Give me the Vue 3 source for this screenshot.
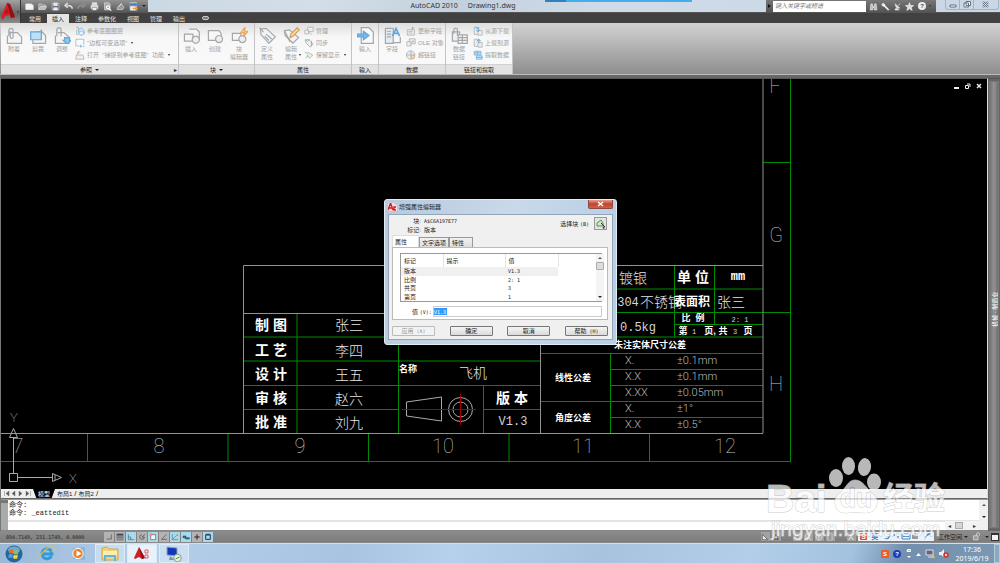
<script setup>
import { h, ref } from 'vue'

const G = '#a3a7aa'
const B = '#62a8dc'
const icons = {
  attach: [['M5 8h11l6 6v9H2V12', G, '#f4f4f4'], ['M4 13V5a3 3 0 0 1 6 0v9a2 2 0 0 1-4 0V6', G, 'none']],
  clip: [['M8 7h9l5 5v11H4V10', G, '#f4f4f4'], ['M1 7h15v11H1z', B, '#bfdff5'], ['M16 3v4', B, 'none']],
  adjust: [['M5 8h9l7 6v9H2V12', G, '#f4f4f4'], ['M4 13V4a3 3 0 0 1 6 0v9', G, 'none'], ['M15 15h7v4h2l-5 5-6-5h2z', B, '#8cc5ee']],
  layers: [['M4 6V4a2 2 0 0 1 4 0v8M4 10v10h5', G, 'none'], ['M9 8l7-3 6 6v8l-8 4-5-6z', B, '#e6f1fa'], ['M9 15l7-4 6 6', B, 'none']],
  border: [['M2 3h19v13M2 3v16h8', G, '#fafafa'], ['M11 20h6m2 0h4M14 16v7', B, 'none']],
  open: [['M3 12h16l3 10H2z', G, '#f7f0ea'], ['M6 12V5h7M9 2v7', '#e5a183', 'none']],
  insert: [['M9 3h10l4 4v10H10', G, '#f6f6f6'], ['M2 10h12v10H2z', G, '#f6f6f6'], ['M18 13a5 5 0 1 0 .1 0', G, '#eee']],
  create: [['M2 5h15l3 4v10H2z', G, '#f6f6f6'], ['M17 12a5 5 0 1 0 .1 0', G, '#eee']],
  edit: [['M2 9h12v10H2z', G, '#f6f6f6'], ['M16 12a5 5 0 1 0 .1 0', G, '#eee'], ['M20 0l-6 8h5l-2 6 7-8h-5z', '#e6a75b', '#fbdba5']],
  tag: [['M2 3l8-1 13 12-9 9L3 11z', G, '#f3f3f3'], ['M6 7h.5M10 10l8 7M8 13l6 6', G, 'none'], ['M1 1l5 6', G, 'none']],
  tagedit: [['M2 5l7-1 13 11-8 8L3 12z', G, '#f3f3f3'], ['M10 15l1-5L20 1l3 3-9 9z', '#d3a15e', '#f3dcaa'], ['M2 5l8 16', G, 'none']],
  manage: [['M9 3h13v10H9z', G, '#f1f1f1'], ['M2 10h9v9H2z', G, '#f1f1f1'], ['M11 13l8 8', G, 'none']],
  sync: [['M3 5l7-2 12 11-7 8L4 11z', G, '#eee'], ['M3 3l5 5 6-5M18 7v13', '#76ac82', 'none']],
  keep: [['M2 5l9 6-7 9', '#73b480', 'none'], ['M8 5l13 7-9 9', G, '#eee'], ['M8 13l4 5', '#5aa86d', 'none']],
  import: [['M6 1h11l6 6v16H6z', G, '#fafafa'], ['M0 10h9V6l8 6-8 6v-4H0z', B, '#79b7e8']],
  field: [['M2 2h11v21H2zM4 6h6M4 10h6M4 14h6', G, '#e4ebf1'], ['M13 22h10V14', G, 'none'], ['M12 13l5-11 5 11M14 9h6', B, 'none', 2.4]],
  update: [['M3 9h17v13H3zM6 13h10M6 17h10', G, '#f1f1f1'], ['M16 9V3m-3 3l3-3 4 3', '#75ad72', 'none']],
  ole: [['M8 2h14v12H8z', G, '#eee'], ['M2 9h10v10H2z', G, '#eee'], ['M13 12l4-6 3 5', G, 'none']],
  link: [['M11 2a10 10 0 1 0 .1 0M2 12h20M12 2v20', G, '#e9e9e9'], ['M13 17a4 4 0 1 0 8 0a4 4 0 1 0-8 0', '#dba65a', 'none']],
  datalink: [['M2 7h10v13H2z', G, '#f0f0f0'], ['M10 11h13v12H10zM10 15h13M10 19h13M16 11v12', G, '#f4f4f4'], ['M4 10V4a2 2 0 0 1 5 0v8', G, 'none']],
  down: [['M3 3h11v17H3z', G, '#eee'], ['M12 11h10v11H12z', G, '#eee'], ['M6 5h8M12 5v8m-4-3l4 4 4-4', B, 'none', 2.4]],
  up: [['M3 3h11v17H3z', G, '#eee'], ['M12 11h10v11H12z', G, '#eee'], ['M14 12V4m-5 4l5-5 5 5', B, 'none', 2.4]],
  extract: [['M3 3h16v9H3zM8 14h14v8H8z', B, '#cfe6f7'], ['M3 7h16M10 3v9M8 18h14', B, 'none']],
  newfile: [['M2 5h15l5 4v11H2z', '#eee', '#f4f4f4']],
  folder: [['M2 5h8l2 3h8v4H7L2 20z', '#ddd', '#999'], ['M7 12h16l-4 8H2z', '#ddd', '#bbb']],
  save: [['M3 3h18v18H3z', '#d5dae2', '#59616e'], ['M7 3h10v7H7zM7 15h10v6H7z', '#eee', '#eee']],
  undo: [['M22 18c0-9-8-9-13-9M10 3L3 9l7 6', '#ddd', 'none', 4]],
  redo: [['M2 18c0-9 8-9 13-9M14 3l7 6-7 6', '#8e8e8e', 'none', 4]],
  print: [['M6 8V2h12v6M3 9h18v9H3z', '#eee', '#ddd'], ['M6 15h12v7H6z', '#777', '#fff']],
  preview: [['M4 2h12l3 4v15H4z', '#ddd', '#aaa'], ['M13 10a4 4 0 1 0 .1 0M16 17l6 6', '#fff', 'none', 3]],
  plot: [['M3 15L14 5l7 9-3 6H3z', '#ddd', '#999'], ['M7 13l8-10', '#fff', 'none']],
  sheet: [['M3 2h17v20H3z', '#ddd', '#eee'], ['M3 4h17v6H3z', '#4585be', '#4585be'], ['M10 17h12m-5-5l5 5-5 5', '#e79a3c', 'none', 3]],
  find: [['M3 21l2-16h4l1 7h4l1-7h4l2 16h-7v-6h-4v6z', '#eee', '#bbb']],
  wrench: [['M4 4l5 1 2 5 10 10-2 2L9 12 4 10 2 6l4 2 1-1z', '#fff', '#fff']],
  dish: [['M6 5l12 11c-8 2-12-4-12-11zM14 10l5-6M9 15l-4 6h12', '#eee', '#ddd']],
  star: [['M12 2l3 7 8 .5-6 5 2 8-7-4.500-7 4.500 2-8-6-5 8-.5z', '#eee', '#ddd']],
  snap: [['M19 4v14H5', '#333', 'none']],
  grid: [['M3 4h18v17H3zM3 9h18M3 14h18M9 4v17M15 4v17', '#4b5158', 'none', 1.5], ['M3 3h18v3H3z', '#444', '#444']],
  ortho: [['M4 3v17h17M4 12h7v8', '#31566e', 'none']],
  polar: [['M12 5a7 7 0 1 0 7 7M12 12l9-8M12 12h7', '#333', 'none']],
  osnap: [['M5 5h15v15H5z', '#444', '#f5f5f5'], ['M2 2h6v6H2z', '#e68a3a', '#f5b277']],
  track: [['M19 4L5 19h16', '#333', 'none']],
  ducs: [['M4 3v17h17M4 20L17 7', '#3b6a8c', 'none'], ['M17 4l4 4', '#d8993f', 'none', 4]],
  dyn: [['M3 9h9v5H3zM10 14h12v4H10z', '#224f66', '#37708c']],
  plus: [['M12 4v16M4 12h16', '#222', 'none', 3]],
  props: [['M5 6h14v13H5zM5 4h14', '#235', 'none', 3]],
  corner: [['M4 4v16h16z', '#333', '#eee']],
  peak: [['M3 20h18M6 17l6-13 6 13z', '#333', '#ddd']],
  pan: [['M5 12l4-7 3 5 3-6 5 9-6 8z', '#eee', '#999']],
  zoomer: [['M10 4a6 6 0 1 0 .1 0M15 15l6 6', '#eee', 'none', 2.5]],
  wheel: [['M12 3a9 9 0 1 0 .1 0M12 9a3 3 0 1 0 .1 0', '#eee', 'none', 2.5]],
  film: [['M6 3h12v18H6zM6 9h12M6 15h12', '#eee', '#777']],
  person: [['M12 3v7L5 21M12 10l7 11', '#eee', 'none', 3]],
  lock: [['M4 10h12v11H4z', '#eee', '#999'], ['M12 10V6a4 4 0 0 1 8 0v4', '#eee', 'none']]
}
const Icon = (p) => h('svg', { viewBox: '0 0 24 24', 'aria-hidden': 'true', width: p.size || 10, height: p.size || 10 },
  icons[p.name].map(([d, stroke, fill, w]) => h('path', { d, stroke, fill, 'stroke-width': w || 1.7 })))
Icon.props = ['name', 'size']

const quick = ['newfile', 'folder', 'save', 'undo', 'redo', 'print', 'preview', 'plot', 'sheet']
const menu = ['常用', '插入', '注释', '参数化', '视图', '管理', '输出']
const panels = [
  { name: '参照', cls: 'p-ref', drop: true, corner: true,
    big: [['attach', '附着'], ['clip', '剪裁'], ['adjust', '调整']],
    rows: [['layers', '参考底图图层'], ['border', '"边框可变选项"', 1], ['open', '打开  "捕捉到参考底图"  功能', 1]] },
  { name: '块', cls: 'p-block', drop: true, big: [['insert', '插入'], ['create', '创建'], ['edit', '块', '编辑器']], rows: [] },
  { name: '属性', cls: 'p-attr', big: [['tag', '定义', '属性'], ['tagedit', '编辑', '属性', 1]],
    rows: [['manage', '管理'], ['sync', '同步'], ['keep', '保留显示', 1]] },
  { name: '输入', cls: 'p-in', big: [['import', '输入']], rows: [] },
  { name: '数据', cls: 'p-data', big: [['field', '字段']], rows: [['update', '更新字段'], ['ole', 'OLE 对象'], ['link', '超链接']] },
  { name: '链接和提取', cls: 'p-link', big: [['datalink', '数据', '链接']], rows: [['down', '从源下载'], ['up', '上载到源'], ['extract', '提取数据']] }
]

const green = [
  'M790.500 78V462M1 461.500H791M763 162.500H791M763 312.500H791',
  'M87.500 433V461M228 433V461M368.500 433V461M509 433V461M649.500 433V461',
  'M297 313V433M398.500 313V433M243 337H540M243 361H540M243 385.500H540M243 409.500H399M483.500 385V433M484 409.500H540',
  'M674.500 265V337M714.500 265V324M540 289H763M540 312.500H763M674 324.500H763M540 337H763',
  'M540 353.500H763M610.500 353V433M610 369.500H763M610 385.500H763M540 401.500H763M610 417.500H763'
]
const heads = [
  [271, 325, '制 图'], [271, 350, '工 艺'], [271, 374, '设 计'], [271, 398, '审 核'], [271, 422, '批 准'],
  [512, 398, '版 本'], [693, 277, '单 位']
]
const names = [[349, 324, '张三'], [349, 350, '李四'], [349, 374, '王五'], [349, 398, '赵六'], [349, 422, '刘九'],
  [473, 372, '飞机'], [633, 277, '镀银'], [731, 301, '张三']]
const smallHeads = [[573, 378, '线性公差'], [573, 418, '角度公差'], [650, 345, '未注实体尺寸公差'],
  [693, 318, '比  例'], [683, 331, '第'], [710, 331, '页,'], [723, 331, '共'], [748, 331, '页']]
const tol = [[360, 'X.', '±0.1mm'], [376, 'X.X', '±0.1mm'], [392, 'X.XX', '±0.05mm'], [408, 'X.', '±1°'], [424, 'X.X', '±0.5°']]
const zones = [[18, 446, '7'], [159, 446, '8'], [300, 446, '9'], [443, 446, '10'], [583, 446, '11'], [725, 446, '12'],
  [775, 86, 'F'], [776, 235, 'G'], [776, 384, 'H']]

const attrs = [['版本', '', 'V1.3'], ['比例', '', '2: 1'], ['共页', '', '3'], ['第页', '', '1']]
const value = ref('V1.3')
const toggles = [['snap', 0], ['grid', 0], ['ortho', 1], ['polar', 0], ['osnap', 1], ['track', 0], ['ducs', 1], ['dyn', 1], ['plus', 0], ['props', 1]]
</script>

<template>
  <div class="app">
    <header class="top">
      <button class="logo" aria-label="应用程序菜单">
        <svg width="14" height="18" viewBox="0 0 14 18"><path d="M0 14L6 0l3 1 5 13-4 1-1-3-5 1-2 4z" fill="#d61f26" /><path d="M6 0l3 1 5 13-4 1z" fill="#951016" /><path d="M3 11l3-6 2 5z" fill="#b3151c" /></svg>
        <i class="caret dark"></i>
      </button>
      <div class="bars">
        <div class="titlebar">
          <div class="quick">
            <button v-for="q in quick" :key="q" :aria-label="q"><Icon :name="q" size="9" /></button>
            <i class="caret"></i>
          </div>
          <h1><span>AutoCAD 2010</span><span>Drawing1.dwg</span></h1>
          <div class="search">
            <i class="tri"></i>
            <input type="text" aria-label="搜索" placeholder="键入关键字或短语">
            <button v-for="q in ['find', 'wrench', 'dish', 'star']" :key="q" :aria-label="q"><Icon :name="q" size="9" /></button>
            <button class="help">?</button><i class="caret dark"></i>
          </div>
          <div class="winbtns">
            <button aria-label="最小化"><svg width="8" height="7"><path d="M1 4h6v2H1z" fill="#fff" stroke="#65717f" /></svg></button>
            <button aria-label="还原"><svg width="8" height="7"><path d="M3 .5h4.500v4H3zM1 2h4.500v4H1z" fill="#fff" stroke="#65717f" /></svg></button>
            <button aria-label="关闭" class="wide"><svg width="8" height="7"><path d="M1 1l5 5M6 1L1 6" stroke="#65717f" stroke-width="2" /><path d="M1 1l5 5M6 1L1 6" stroke="#fff" stroke-width=".7" /></svg></button>
          </div>
        </div>
        <nav class="menu">
          <button v-for="(m, i) in menu" :key="m" :class="{ on: i === 1 }">{{ m }}</button>
          <span class="pill"></span>
        </nav>
      </div>
      <div class="notice"></div>
    </header>

    <section class="ribbon">
      <div v-for="p in panels" :key="p.name" class="panel" :class="p.cls">
        <div class="tools">
          <button v-for="b in p.big" :key="b[0]" class="big">
            <Icon :name="b[0]" size="17" />
            <span>{{ b[1] }}</span>
            <span v-if="b[2]">{{ b[2] }}<i v-if="b[3]" class="caret dark hang"></i></span>
          </button>
          <div v-if="p.rows.length" class="rows">
            <button v-for="r in p.rows" :key="r[0]"><Icon :name="r[0]" size="10" />{{ r[1] }}<i v-if="r[2]" class="caret dark"></i></button>
          </div>
        </div>
        <div class="pname">{{ p.name }}<i v-if="p.drop" class="caret big-c"></i><i v-if="p.corner" class="corner">▸</i></div>
      </div>
    </section>

    <main class="work">
      <div class="left">
        <div class="canvas">
          <svg class="drawing" width="100%" height="100%">
            <g transform="translate(-1,-79)" fill="none">
              <path v-for="d in green" :key="d" :d="d" stroke="#008a00" />
              <path d="M763 78V433M1 433.500H763M243.500 433V265.500H763M243 313.500H540M540.500 313V433" stroke="#929292" />
              <path d="M406.500 402L441.500 397V421L406.500 416z" stroke="#aaa" />
              <circle cx="460.500" cy="409.500" r="12" stroke="#aaa" /><circle cx="460.500" cy="409.500" r="7.500" stroke="#aaa" />
              <path d="M402 409.500H476M460.500 394V425" stroke="#a40000" />
              <g stroke="#aaa">
                <path d="M9.500 473.500h8v8h-8zM13.500 473V438M9.500 437.500h8l-4-9zM18 477.500H52M52.500 473.500v8l9-4zM55 475v5" />
              </g>
              <g class="t zone">
                <text v-for="z in zones" :key="z[2]" :x="z[0]" :y="z[1]">{{ z[2] }}</text>
                <text x="14" y="417" class="ucs">Y</text><text x="73" y="478" class="ucs">X</text>
              </g>
              <g class="t head"><text v-for="(z, i) in heads" :key="i" :x="z[0]" :y="z[1]">{{ z[2] }}</text></g>
              <g class="t name">
                <text v-for="(z, i) in names" :key="i" :x="z[0]" :y="z[1]">{{ z[2] }}</text>
                <text x="661" y="301">不锈钢</text>
              </g>
              <g class="t mono">
                <text x="628" y="303">304</text><text x="638" y="328">0.5kg</text><text x="513" y="422">V1.3</text>
                <text x="738" y="277" class="mm">mm</text>
                <text x="740" y="320" class="tiny">2: 1</text><text x="694" y="332" class="tiny">1</text><text x="735" y="332" class="tiny">3</text>
              </g>
              <g class="t small">
                <text v-for="(z, i) in smallHeads" :key="i" :x="z[0]" :y="z[1]">{{ z[2] }}</text>
                <text x="408" y="369">名称</text>
                <text x="692" y="302" class="mid">表面积</text>
              </g>
              <g class="tol"><template v-for="r in tol" :key="r[0]"><text x="625" :y="r[0]">{{ r[1] }}</text><text x="677" :y="r[0]">{{ r[2] }}</text></template></g>
            </g>
          </svg>
          <div class="docbtns">
            <button aria-label="最小化"><svg width="6" height="6"><path d="M0 5h5" stroke="#eee" stroke-width="2" /></svg></button>
            <button aria-label="还原"><svg width="6" height="6"><path d="M2 1h3v3M.5 2.500h3v3h-3z" stroke="#eee" fill="none" /></svg></button>
            <button aria-label="关闭"><svg width="6" height="6"><path d="M1 1l4 4M5 1L1 5" stroke="#eee" stroke-width="1.400" /></svg></button>
          </div>
        </div>
        <div class="layouts">
          <svg width="30" height="7"><path d="M3.500 1v5M8 1v5L5 3.500zM14 1v5l-3-2.500zM18 1v5l3-2.500zM25 1v5l3-2.500zM29.500 1v5" fill="#555" stroke="#777" stroke-width=".5" /></svg>
          <button class="on">模型</button><button>布局1</button><span>/</span><button>布局2</button><span>/</span>
        </div>
        <div class="cmd">
          <div class="grip"></div>
          <div class="log">
            <p>命令:</p><p>命令: <span>_eattedit</span></p>
            <input type="text" aria-label="命令行">
          </div>
          <div class="vs"><i class="up"></i><i class="caret"></i></div>
          <div class="hs"><i>◂</i><b></b><i>▸</i></div>
        </div>
      </div>
      <aside class="palette">
        <svg width="10" height="100%"><text class="ptext" transform="translate(7,245) rotate(-90)">机械 - 制造业</text></svg>
      </aside>
    </main>

    <footer class="status">
      <span class="coords">894.7149, 231.1749, 0.0000</span>
      <div class="toggles"><button v-for="t in toggles" :key="t[0]" :class="{ on: t[1] }" :aria-label="t[0]"><Icon :name="t[0]" size="8" /></button></div>
      <div class="sright">
        <button class="chip" aria-label="模型"><Icon name="corner" size="8" /></button><button class="chip" aria-label="布局"><Icon name="peak" size="8" /></button>
        <span class="gap"></span>
        <button v-for="n in ['pan', 'zoomer', 'wheel', 'film']" :key="n" class="chip" :aria-label="n"><Icon :name="n" size="8" /></button>
        <span class="gap"></span>
        <button class="chip" aria-label="注释比例"><Icon name="person" size="8" /></button>
        <div class="ime">
          <b>S</b><em>英</em>
          <svg width="36" height="9" viewBox="0 0 36 9" fill="#3b87cc"><path d="M6 1c1 4-2 6-5 5 3 3 8 0 5-5z" /><circle cx="11" cy="3" r="1" /><path d="M14 4l1 3 1-3z" /><path d="M19 2h8v5h-8z" fill="none" stroke="#3b87cc" /><path d="M20 4.500h6" stroke="#3b87cc" /><path d="M31 1h2v2h2v4h-6V3h2z" fill="#999" /></svg>
          <svg width="9" height="9" viewBox="0 0 9 9"><path d="M1 8l3-4 4-2-1-1-3 1-2 4z" fill="#3b87cc" /></svg>
        </div>
        <button class="ws">工作空间<i class="caret"></i></button>
        <button class="chip lock" aria-label="锁定"><Icon name="lock" size="9" /></button><i class="caret"></i><button class="full" aria-label="全屏"></button>
      </div>
    </footer>

    <footer class="taskbar">
      <button class="orb" aria-label="开始"><svg width="18" height="18" viewBox="0 0 18 18"><circle cx="9" cy="9" r="8.500" fill="#28659a" /><ellipse cx="9" cy="5" rx="6" ry="3.500" fill="#6fa9cf" /><path d="M4.500 5q2-1 4 0l-.5 3.500q-2-1-4 0z" fill="#ef6a2f" /><path d="M9.300 5.300q2 1 4.200 0L13 9q-2 1-4.200 0z" fill="#8cc63f" /><path d="M3.800 9.500q2-1 4 0l-.5 3.500q-2-1-4 0z" fill="#3fa9f0" /><path d="M8.600 9.800q2 1 4.200 0l-.5 3.500q-2 1-4.200 0z" fill="#ffd23e" /></svg></button>
      <button class="task" aria-label="浏览器"><svg width="17" height="17" viewBox="0 0 17 17"><path d="M13.500 11a5 5 0 1 1 .5-2H5" stroke="#2f9be0" stroke-width="3" fill="none" /><path d="M2 15C-1 13 8 1 15 2c2 1 0 4-1 5" stroke="#f0bd3c" stroke-width="1.200" fill="none" /></svg></button>
      <button class="task" aria-label="媒体播放器"><svg width="15" height="15" viewBox="0 0 15 15"><path d="M2 2l12-1v13l-12-1z" fill="#7fb9e0" /><circle cx="7" cy="7.500" r="5.200" fill="#f0802a" stroke="#fff" /><path d="M5.500 4.500v6l5-3z" fill="#fff" /></svg></button>
      <button class="task open" aria-label="资源管理器"><svg width="18" height="16" viewBox="0 0 18 16"><path d="M1 2l5-1 2 2h9v11H1z" fill="#f1d275" stroke="#d1a849" /><path d="M2 5h14v5H2z" fill="#fcefb4" /><path d="M4 15v-5h10v5" stroke="#65b4dd" stroke-width="2" fill="none" /></svg></button>
      <button class="task open hot" aria-label="AutoCAD"><svg width="18" height="16" viewBox="0 0 18 16"><path d="M1 12L6 1l6 11-3 1-3-2-4 2z" fill="#cf1f27" /><path d="M6 1l6 11-3 1z" fill="#8e1016" /><path d="M12 4h3v3h-3zM12 9h3v3h-3z" fill="none" stroke="#e05a5f" /></svg></button>
      <button class="task open" aria-label="远程"><svg width="18" height="16" viewBox="0 0 18 16"><path d="M2 1l10 1v8L2 9z" fill="#1138b8" stroke="#8fa3bd" /><path d="M5 10l5 4H4z" fill="#8192a8" /><circle cx="12.500" cy="12" r="3.800" fill="#e6efe2" stroke="#8ba08b" /><path d="M10.500 13l4-2" stroke="#3d9a3d" /></svg></button>
      <div class="tray">
        <b class="sogou">S</b><b class="q">?</b>
        <svg width="7" height="12"><path d="M2.500 1.500h3v2h-3zM1.500 3h3" fill="none" stroke="#fff" /><path d="M2 8h4L4 10z" fill="#fff" /></svg>
        <svg width="5" height="6"><path d="M0 5h5L2.500 2z" fill="#fff" /></svg>
        <svg width="10" height="9"><path d="M1 1h7v5H1zM3 8h4" fill="#667" stroke="#dde" /><path d="M6 9l2-4 2 4z" fill="#f2c230" /></svg>
        <svg width="10" height="9"><path d="M0 3h2l3-3v8L2 6H0z" fill="#eee" /><circle cx="7" cy="6" r="2.800" fill="#d8322a" /><path d="M6 5l2 2M8 5L6 7" stroke="#fff" stroke-width=".8" /></svg>
        <time><span>17:36</span><span>2019/6/19</span></time>
      </div>
      <button class="desk" aria-label="显示桌面"></button>
    </footer>

    <section class="dialog" role="dialog" aria-label="增强属性编辑器">
      <div class="dtitle">
        <svg width="9" height="8" viewBox="0 0 9 8"><path d="M0 0h6l3 3v5H0z" fill="#f7dada" /><path d="M0 7L2.500 0 5 7M1 5h3M8 4H6v3h2" fill="none" stroke="#cf2027" stroke-width="1.400" /></svg>
        <h2>增强属性编辑器</h2>
        <button aria-label="关闭"><svg width="7" height="6"><path d="M1 1l5 4M6 1L1 5" stroke="#fff" stroke-width="1.500" /></svg></button>
      </div>
      <div class="dbody">
        <div class="info">
          <dl><dt>块:</dt><dd class="m">A$C6A197E77</dd><dt>标记:</dt><dd>版本</dd></dl>
          <label for="pick">选择块 <span class="m">(B)</span></label>
          <button id="pick" aria-label="选择块"><svg width="10" height="10" viewBox="0 0 10 10"><path d="M1 7V4l4-3 2 3v3z" fill="#cfe8c8" stroke="#4f9a45" /><path d="M5 4l4 4H7l1 2" fill="none" stroke="#333" /></svg></button>
        </div>
        <div class="dtabs"><button class="on">属性</button><button>文字选项</button><button>特性</button></div>
        <div class="pane">
          <div class="list">
            <table>
              <thead><tr><th class="c1">标记</th><th class="c2">提示</th><th class="c3">值</th><th></th></tr></thead>
              <tbody><tr v-for="(a, i) in attrs" :key="i" :class="{ sel: !i }"><td>{{ a[0] }}</td><td>{{ a[1] }}</td><td class="m">{{ a[2] }}</td><td></td></tr></tbody>
            </table>
            <div class="sb"><i class="up"></i><b></b><i class="caret"></i></div>
          </div>
          <div class="val"><label for="val">值 <span class="m">(V):</span></label><input id="val" v-model="value" type="text"></div>
        </div>
        <div class="dbtns">
          <button disabled>应用<span class="m"> (A)</span></button><button>确定</button><button>取消</button><button>帮助<span class="m"> (H)</span></button>
        </div>
      </div>
    </section>

    <svg class="mark" width="184" height="90" viewBox="766 453 184 90" aria-label="Baidu经验">
      <g fill="#fff" stroke="#bbb" stroke-width="1" paint-order="stroke">
        <g stroke="none"><ellipse cx="836" cy="478" rx="7" ry="9" /><ellipse cx="848.500" cy="466" rx="6.500" ry="9" /><ellipse cx="864.500" cy="467" rx="6.500" ry="9" transform="rotate(8 864 467)" /><ellipse cx="874" cy="482" rx="7" ry="8.500" /></g>
        <path d="M855 480c-7 0-9 8-15 13-5 4-6 8-4 14 2 7 9 6 19 5 10 1 18 2 21-5 2-6 1-9-4-14-6-5-9-13-17-13z" />
        <text x="766" y="512" class="bai">Bai</text>
        <text x="840" y="507" class="du">du</text>
        <text x="883" y="509" class="jy">经验</text>
        <text x="771" y="536" class="url">jingyan.baidu.com</text>
      </g>
    </svg>
  </div>
</template>

<style>
body { margin: 0; background: #000; }
</style>

<style scoped>
.app { position: relative; display: flex; flex-direction: column; min-height: 100vh; overflow: hidden; font: 6px/8px "Liberation Sans", "Noto Sans CJK SC", sans-serif; color: #222; background: #6c6c6c; }
.app * { box-sizing: border-box; }
button { font: inherit; color: inherit; border: 0; padding: 0; margin: 0; background: none; display: flex; align-items: center; justify-content: center; }
input { font: inherit; border: 0; padding: 0; min-width: 0; outline: 0; background: #fff; border-radius: 0; }
h1, h2, p, dl, dd { margin: 0; font: inherit; }
svg { display: block; flex: none; }
.m { font-family: "DejaVu Sans Mono", monospace; font-size: 5px; }
.caret { display: block; flex: none; border: 2px solid transparent; border-top: 2px solid #222; border-bottom: 0; }
.up { display: block; border: 2px solid transparent; border-bottom: 2px solid #555; border-top: 0; }
.caret.dark { border-width: 1px; border-top: 2px solid #333; border-bottom: 0; }

.top { position: relative; display: flex; height: 23px; background: #414141; }
.logo { width: 21px; background: linear-gradient(#a2a2a2, #666 60%, #8c8c8c); border-right: 1px solid #333; gap: 2px; }
.bars { flex: 1; display: flex; flex-direction: column; min-width: 0; }
.titlebar { display: flex; height: 13px; background: linear-gradient(100deg, #c6d3e0, #d3dee9 30%, #c3d0dd 45%, #cfdbe8 60%, #c9d6e3); border-bottom: 1px solid #555; }
.quick { display: flex; align-items: center; width: 127px; padding: 0 4px; gap: 5px; background: linear-gradient(#929292, #585858); }
.quick button { width: 8px; }
.titlebar h1 { flex: 1; display: flex; justify-content: center; gap: 10px; font: 7px/12px "Noto Sans", sans-serif; color: #333; padding-left: 12px; }
.search { display: flex; align-items: center; gap: 3px; width: 170px; background: linear-gradient(#777, #555); padding-right: 2px; }
.search input { width: 93px; height: 11px; padding-left: 2px; font-style: italic; }
.search input::placeholder { color: #777; opacity: 1; }
.tri { width: 4px; margin-left: 2px; margin-right: -2px; border: 2px solid transparent; border-left: 3px solid #111; border-right: 0; }
.help { width: 8px; height: 8px; border-radius: 4px; background: #eee; color: #444; font-weight: bold; margin-left: 1px; }
.winbtns { display: flex; width: 54px; height: 10px; margin: 0 1px 0 9px; border: 1px solid #a5b3c1; border-top: 0; border-radius: 0 0 3px 3px; }
.winbtns button { width: 14px; border-right: 1px solid #a5b3c1; }
.winbtns .wide { width: auto; flex: 1; border: 0; }
.menu { display: flex; align-items: flex-end; height: 10px; padding-left: 3px; color: #e6e6e6; gap: 1px; }
.menu button { height: 9px; padding: 0 5px; }
.menu button.on { background: #e4e4e4; color: #222; }
.pill { width: 7px; height: 4px; margin: 0 0 3px 11px; border: 1px solid #ccc; border-radius: 2px; background: #777; }
.notice { position: absolute; left: 545px; top: 0; width: 147px; height: 2px; background: linear-gradient(90deg, #3182b8 21px, #43aeea 21px); }

.ribbon { display: flex; height: 55px; padding: 0 0 3px 1px; background: linear-gradient(#d2d2d2, #8e8e8e 51px, #bcbcbc 51px, #bcbcbc 52px, #686868 52px); color: #a0a0a0; }
.panel { display: flex; flex-direction: column; border-right: 1px solid #c3c3c3; background: linear-gradient(#dedede, #f7f7f7 14px, #fafafa); margin-bottom: 1px; }
.p-ref { width: 178px; } .p-block { width: 76px; } .p-attr { width: 97px; } .p-in { width: 27px; } .p-data { width: 67px; } .p-link { width: 67px; }
.tools { flex: 1; display: flex; padding-left: 1px; }
.big { flex-direction: column; justify-content: flex-start; width: 24px; padding-top: 4px; }
.big svg { margin-bottom: 1px; }
.big span { position: relative; white-space: nowrap; }
.hang { position: absolute; right: -4px; top: 1px; }
.rows { display: flex; flex-direction: column; padding-top: 2px; margin-left: 1px; }
.rows button { height: 12px; gap: 2px; justify-content: flex-start; white-space: pre; }
.rows .caret { margin-left: 2px; }
.pname { position: relative; display: flex; align-items: center; justify-content: center; gap: 3px; height: 10px; background: #e2e2e2; color: #222; border-top: 1px solid #d2d2d2; }
.corner { position: absolute; right: 1px; font-style: normal; }
.p-block .tools, .p-attr .tools { padding-left: 0; }
.p-data .rows, .p-link .rows { margin-left: 2px; }

.work { flex: 1; display: flex; min-height: 0; }
.left { flex: 1; display: flex; flex-direction: column; min-width: 0; border-left: 1px solid #777; }
.canvas { position: relative; flex: 1; background: #000; border-top: 1px solid #555; border-right: 1px solid #ddd; overflow: hidden; }
.drawing { position: absolute; inset: 0; }
.t text { text-anchor: middle; dominant-baseline: central; white-space: pre; }
.zone { fill: #c4c4c4; font: 20px "Liberation Sans Narrow", "Roboto", sans-serif; font-weight: 100; }
.zone .ucs { font-size: 13px; fill: #ddd; }
.head { fill: #fff; font: bold 14px "Liberation Sans", "Noto Sans CJK SC", sans-serif; }
.name { fill: #e4e4e4; font: 300 14px "Noto Sans CJK SC", sans-serif; }
.mono { fill: #d4d4d4; font: 12px "Liberation Mono", monospace; }
.mono .mm { fill: #fff; font-weight: bold; }
.mono .tiny { font-size: 7px; }
.small { fill: #fff; font: bold 9px "Liberation Sans", "Noto Sans CJK SC", sans-serif; }
.small .mid { font-size: 12px; }
.tol { fill: #bbb; font: 300 11px "Roboto", sans-serif; }
.tol text { dominant-baseline: central; }
.docbtns { position: absolute; right: 5px; top: 4px; display: flex; gap: 5px; }
.layouts { display: flex; align-items: center; height: 10px; gap: 2px; background: #eee; border-bottom: 1px solid #666; border-right: 1px solid #ddd; color: #222; }
.layouts .on { background: #000; color: #fff; width: 22px; height: 9px; clip-path: polygon(0 0, 100% 0, 85% 100%, 15% 100%); }
.layouts span { font-size: 8px; }
.cmd { position: relative; display: flex; height: 32px; background: #fff; border-top: 1px solid #999; border-bottom: 1px solid #888; }
.grip { width: 7px; background: linear-gradient(#777 3px, #aaa 3px); }
.log { flex: 1; display: flex; flex-direction: column; font: 7px/8px "Liberation Mono", "Noto Sans CJK SC", monospace; color: #222; padding-top: 1px; }
.log p { padding-left: 1px; }
.log input { margin-top: 3px; height: 10px; border-top: 2px solid #e4e4e4; }
.vs { display: flex; flex-direction: column; justify-content: space-between; align-items: center; width: 9px; padding: 4px 0 12px; background: #f0f0f0; }
.hs { position: absolute; right: 9px; bottom: 0; display: flex; align-items: center; justify-content: space-between; width: 34px; height: 9px; padding: 0 3px; background: #f3f3f3; color: #333; }
.hs i { font-style: normal; }
.hs b { width: 8px; height: 7px; background: #d5d5d5; border: 1px solid #aaa; margin-right: 6px; }
.palette { width: 12px; padding: 2px 0 3px 1px; background: #666; border-top: 1px solid #555; }
.palette svg { background: linear-gradient(90deg, #747474, #939393, #707070); border: 1px solid #777; }
.ptext { font-size: 6px; fill: #fff; }

.status { display: flex; align-items: center; height: 12px; background: linear-gradient(#8c8c8c, #7c7c7c); color: #222; border-bottom: 1px solid #888; }
.coords { width: 104px; padding-left: 6px; font: 5px/8px "DejaVu Sans Mono", monospace; white-space: nowrap; }
.toggles { display: flex; gap: 1px; }
.toggles button { width: 10px; height: 10px; background: #b3b3b3; }
.toggles .on { background: #a9d9ec; }
.sright { margin-left: auto; display: flex; align-items: center; gap: 2px; padding-right: 1px; }
.chip { width: 9px; height: 9px; background: #a2a2a2; }
.chip.lock { background: none; margin: 0 2px; }
.gap { width: 8px; }
.ime { display: flex; align-items: center; justify-content: space-between; width: 76px; height: 9px; padding: 0 2px; background: #eaf3fb; color: #3b87cc; font-size: 7px; }
.ime b { background: #e8472b; color: #fff; width: 7px; height: 7px; line-height: 7px; text-align: center; border-radius: 1px; }
.ime em { font-style: normal; font-weight: bold; }
.ws { gap: 2px; margin-left: 2px; }
.full { width: 8px; height: 8px; background: #f3f3f3; border: 1px solid #333; border-top-width: 2px; }

.taskbar { display: flex; align-items: center; height: 20px; border-top: 1px solid #cfe0f0; background: linear-gradient(110deg, #9ab8d6, #b4cfea 15%, #a9c4e0 35%, #b5d1ec 45%, #a8c3de 60%, #b2cee9 75%, #a3c2df 85%, #7290ae 90%, #7b98b3); padding-left: 4px; }
.orb { width: 20px; margin-right: 7px; }
.task { width: 30px; height: 19px; margin-right: 2px; }
.task.open { border: 1px solid #dcebf7; background: rgba(220, 236, 248, .55); }
.task.open.hot { background: rgba(245, 250, 254, .8); }
.tray { margin-left: auto; display: flex; align-items: center; gap: 4px; color: #fff; }
.sogou, .q { width: 8px; height: 8px; text-align: center; background: #ef5a2a; border-radius: 1px; }
.q { background: #1a3fb5; border-radius: 4px; }
.tray time { display: flex; flex-direction: column; align-items: center; width: 38px; font: 7px/9px "Noto Sans", sans-serif; }
.desk { width: 6px; height: 19px; margin-left: 3px; background: #8ba8c2; border: 1px solid #b4c9da; }

.dialog { position: absolute; left: 384px; top: 199px; width: 233px; padding: 0 3px 4px; border-radius: 3px; background: linear-gradient(100deg, #b8c9dc, #c9d9ea 50%, #b6cee6); border: 1px solid #e2ecf5; color: #222; }
.dtitle { display: flex; align-items: center; height: 14px; gap: 2px; }
.dtitle h2 { flex: 1; }
.dtitle button { align-self: flex-start; width: 25px; height: 9px; background: linear-gradient(#e5a193, #c2432d 50%, #cf6148); border: 1px solid #8d4a40; border-top: 0; border-radius: 0 0 2px 2px; }
.dbody { padding: 2px 3px 3px; background: #f0f0f0; border: 1px solid #93a6b8; }
.info { display: flex; align-items: flex-start; }
.info dl { flex: 1; display: grid; grid-template-columns: 29px 1fr; column-gap: 3px; row-gap: 1px; }
.info dt { text-align: right; }
.info dd { line-height: 8px; }
.info label { margin: 3px 5px 0 0; }
.info button { width: 13px; height: 13px; border: 1px solid #999; background: #e4e4e4; margin-right: 2px; }
.dtabs { display: flex; align-items: flex-end; height: 12px; margin-top: 1px; }
.dtabs button { height: 10px; padding: 0 2px; border: 1px solid #999; border-bottom: 0; width: 30px; background: linear-gradient(#f2f2f2, #ddd); white-space: nowrap; }
.dtabs button:last-child { width: 24px; justify-content: flex-start; }
.dtabs .on { width: 27px; height: 12px; background: #fff; justify-content: flex-start; border-color: #ddd; }
.pane { background: #fff; border: 1px solid #bbb; padding: 5px 5px 2px 7px; margin-right: 1px; }
.list { display: flex; border: 1px solid #999; height: 49px; }
table { flex: none; width: 195px; border-collapse: collapse; table-layout: fixed; }
th, td { padding: 0 0 0 3px; text-align: left; font-weight: normal; height: 8px; line-height: 8px; white-space: nowrap; }
th { height: 13px; border-right: 1px solid #e4e4e4; }
th:last-child { border: 0; }
.c1 { width: 42px; } .c2 { width: 62px; } .c3 { width: 53px; }
.sel td:not(:last-child) { background: #f0f0f0; }
.sb { flex: 1; display: flex; flex-direction: column; align-items: center; background: #f4f4f4; padding: 3px 0; }
.sb b { width: 8px; height: 8px; margin: 3px 0 auto; background: #ddd; border: 1px solid #aaa; border-radius: 1px; }
.val { display: flex; align-items: center; justify-content: space-between; margin-top: 4px; padding-left: 12px; }
.val label { white-space: nowrap; }
.val input { width: 169px; height: 11px; border: 1px solid #ccc; font: 5px/7px "DejaVu Sans Mono", monospace; color: #fff; background: linear-gradient(#39f, #39f) 0 1px / 13px 7px no-repeat #fff; }
.dbtns { display: flex; justify-content: space-between; margin: 6px 1px 0 0; }
.dbtns button { width: 43px; height: 10px; border: 1px solid #777; border-radius: 1px; background: linear-gradient(#f4f4f4, #dadada); }
.dbtns button:disabled { color: #999; border-color: #bbb; background: #f3f3f3; }
.dbtns .m { white-space: pre; }

.mark { position: absolute; right: 50px; bottom: 20px; opacity: .72; pointer-events: none; }
.bai { font: bold 39px "Liberation Sans", sans-serif; }
.du { font: bold 26px "Liberation Sans", sans-serif; }
.jy { font: bold 31px "Noto Sans CJK SC", sans-serif; }
.url { font: 21px "Liberation Sans", sans-serif; }
</style>
